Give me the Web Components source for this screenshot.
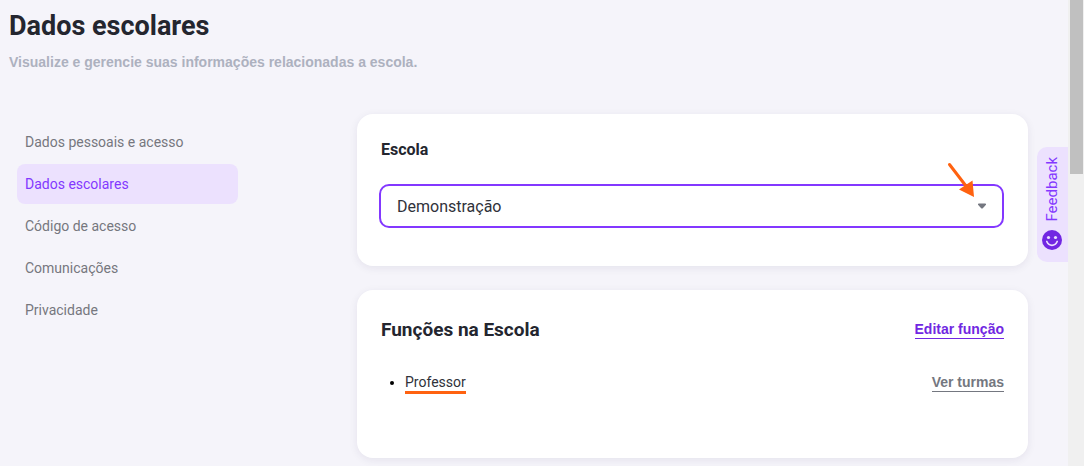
<!DOCTYPE html>
<html lang="pt-BR">
<head>
<meta charset="utf-8">
<title>Dados escolares</title>
<style>
  html, body { height: 100%; }
  body { margin: 0; background: #f5f4fa; color: #24262f; font: 14px/20px Roboto, "Liberation Sans", sans-serif; overflow: hidden; }
</style>
</head>
<body>
<school-page></school-page>
<script>
const define = (name, html, setup) => customElements.define(name, class extends HTMLElement {
  constructor() {
    super();
    const t = document.createElement('template');
    t.innerHTML = html;
    this.attachShadow({ mode: 'open' }).append(t.content.cloneNode(true));
  }
  connectedCallback() { if (setup) setup(this, this.shadowRoot); }
});

define('page-heading', `
<style>
  :host { display: block; }
  h1 { margin: 0; font-size: 27px; line-height: 32px; font-weight: 700; }
  p { margin: 10px 0 0; font-family: "Liberation Sans", Arial, sans-serif; font-weight: 700; color: #adb1bf; }
</style>
<h1><slot></slot></h1>
<p><slot name="subtitle"></slot></p>`);

define('nav-item', `
<style>
  :host { display: block; }
  a { display: block; padding: 10px 8px; border-radius: 8px; color: #76777e; text-decoration: none; }
  :host([active]) a { background: #ece1fe; color: #8338ff; }
</style>
<a href="#"><slot></slot></a>`, (host, root) => {
  if (host.hasAttribute('active')) root.querySelector('a').setAttribute('aria-current', 'page');
});

define('side-nav', `
<style>
  :host { display: block; padding: 8px; }
  nav { display: flex; flex-direction: column; gap: 2px; max-width: 221px; }
</style>
<nav><slot></slot></nav>`);

define('content-card', `
<style>
  :host { display: block; background: #fff; border-radius: 16px; padding: 24px 24px 38px; box-shadow: 0 2px 8px rgba(40, 30, 80, .08); }
</style>
<slot></slot>`);

define('school-select', `
<style>
  :host { display: block; }
  label { display: block; font-size: 16px; line-height: 24px; font-weight: 700; }
  .field { display: grid; align-items: center; margin: 22px 0 0 -2px; }
  select, .caret { grid-area: 1 / 1; }
  select { appearance: none; width: 100%; height: 44px; margin: 0; padding: 2px 40px 0 16px; border: 2px solid #8338ff; border-radius: 10px; background: #fff; color: #30323a; font: inherit; font-size: 16px; line-height: 24px; outline: 0; }
  .caret { justify-self: end; margin-right: 18px; pointer-events: none; }
</style>
<label for="school">Escola</label>
<div class="field">
  <select id="school"><option>Demonstração</option></select>
  <svg class="caret" width="8" height="6" viewBox="0 0 8 6" aria-hidden="true"><path d="M.8.5h6.4q.8 0 .8.8v.5L4.8 5.200q-.8.7-1.600 0L0 1.800v-.5Q0 .5.8.5z" fill="#747780"/></svg>
</div>`);

define('school-roles', `
<style>
  :host { display: block; }
  header { display: flex; justify-content: space-between; align-items: center; }
  li > div { display: flex; justify-content: space-between; align-items: flex-start; }
  h2 { margin: 0; font-size: 19px; line-height: 32px; font-weight: 700; }
  ul { margin: 28px 0 0; padding: 0 0 0 24px; line-height: 17px; }
  li::marker { color: #000; }
  mark { background: none; color: #30323a; border-bottom: 3px solid #ff6210; }
  a { font-family: "Liberation Sans", Arial, sans-serif; font-weight: 700; text-decoration: none; line-height: 17px; border-bottom: 1px solid; color: #747780; }
  header a { color: #7127e2; }
</style>
<header><h2>Funções na Escola</h2><a href="#">Editar função</a></header>
<ul><li><div><mark>Professor</mark><a href="#">Ver turmas</a></div></li></ul>`);

define('feedback-tab', `
<style>
  :host { display: block; }
  button { display: flex; flex-direction: column; align-items: center; gap: 8px; width: 31px; margin: 0; padding: 10px 1px 12px 0; border: 0; border-radius: 10px 0 0 10px; background: #ece1fe; color: #8338ff; font: inherit; font-size: 15px; line-height: 20px; }
  span { writing-mode: vertical-rl; transform: rotate(180deg); }
</style>
<button type="button"><span>Feedback</span>
  <svg width="20" height="20" viewBox="0 0 20 20" aria-hidden="true"><circle cx="10" cy="10" r="10" fill="#7127e2"/><circle cx="6.500" cy="7.500" r="1.600" fill="#ece1fe"/><circle cx="13.500" cy="7.500" r="1.600" fill="#ece1fe"/><path d="M4.800 11.500Q6.500 15.300 10 15.300t5.200-3.800" fill="none" stroke="#ece1fe" stroke-width="1.700" stroke-linecap="round"/></svg>
</button>`);

define('scroll-rail', `
<style>
  :host { display: block; box-sizing: border-box; width: 16px; padding: 0 1px 0 2px; background: #f0f0f0; }
  div { height: 174px; background: #c0c0c0; }
</style>
<div></div>`);

define('school-page', `
<style>
  :host { display: flex; min-height: 100%; }
  main { position: relative; flex: 1; padding: 10px 40px 8px 9px; }
  .columns { display: grid; grid-template-columns: 348px 1fr; margin-top: 42px; align-items: start; }
  .cards { display: grid; gap: 24px; position: relative; }
  .roles { padding-bottom: 64px; }
  .pointer { position: absolute; top: 48px; right: 52px; }
  feedback-tab { position: absolute; right: 0; top: 147px; }
</style>
<main>
  <page-heading>Dados escolares<span slot="subtitle">Visualize e gerencie suas informações relacionadas a escola.</span></page-heading>
  <div class="columns">
    <side-nav>
      <nav-item>Dados pessoais e acesso</nav-item>
      <nav-item active>Dados escolares</nav-item>
      <nav-item>Código de acesso</nav-item>
      <nav-item>Comunicações</nav-item>
      <nav-item>Privacidade</nav-item>
    </side-nav>
    <div class="cards">
      <content-card><school-select></school-select></content-card>
      <content-card class="roles"><school-roles></school-roles></content-card>
      <svg class="pointer" width="30" height="36" viewBox="0 0 30 36" aria-hidden="true"><path d="M3.500 2.500L20 24" stroke="#ff6210" stroke-width="3" stroke-linecap="round"/><path d="M28 35L13 27.500L26.500 18.500Z" fill="#ff6210"/></svg>
    </div>
  </div>
  <feedback-tab></feedback-tab>
</main>
<scroll-rail></scroll-rail>`);
</script>
</body>
</html>
